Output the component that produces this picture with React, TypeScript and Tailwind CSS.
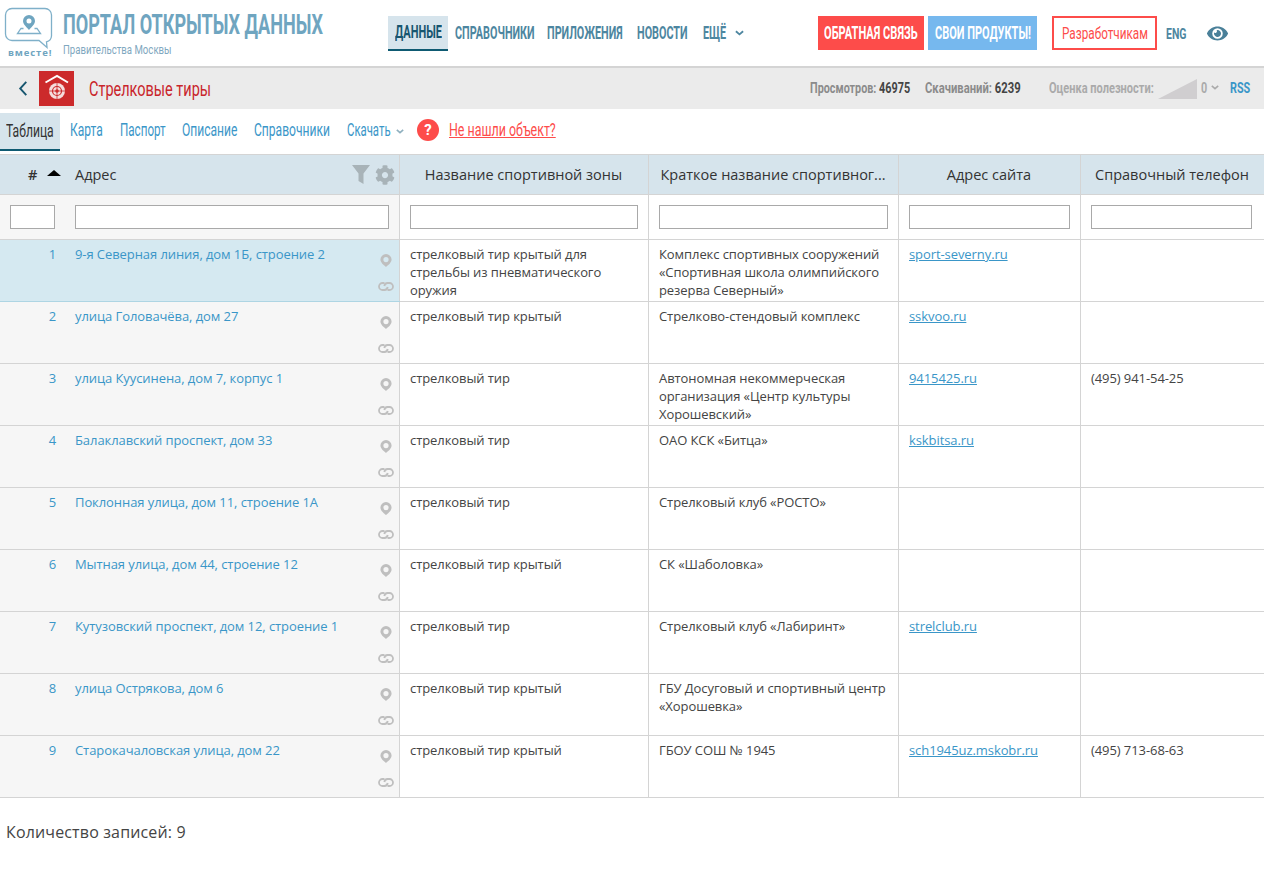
import React from "react";
import { FaCog, FaEye } from "react-icons/fa";

const cond = "font-['Roboto',sans-serif]";
const n = "inline-block whitespace-nowrap origin-left";

const rows = [
  ["1", "9-я Северная линия, дом 1Б, строение 2", ["стрелковый тир крытый для", "стрельбы из пневматического", "оружия"], ["Комплекс спортивных сооружений", "«Спортивная школа олимпийского", "резерва Северный»"], "sport-severny.ru", ""],
  ["2", "улица Головачёва, дом 27", ["стрелковый тир крытый"], ["Стрелково-стендовый комплекс"], "sskvoo.ru", ""],
  ["3", "улица Куусинена, дом 7, корпус 1", ["стрелковый тир"], ["Автономная некоммерческая", "организация «Центр культуры", "Хорошевский»"], "9415425.ru", "(495) 941-54-25"],
  ["4", "Балаклавский проспект, дом 33", ["стрелковый тир"], ["ОАО КСК «Битца»"], "kskbitsa.ru", ""],
  ["5", "Поклонная улица, дом 11, строение 1А", ["стрелковый тир"], ["Стрелковый клуб «РОСТО»"], "", ""],
  ["6", "Мытная улица, дом 44, строение 12", ["стрелковый тир крытый"], ["СК «Шаболовка»"], "", ""],
  ["7", "Кутузовский проспект, дом 12, строение 1", ["стрелковый тир"], ["Стрелковый клуб «Лабиринт»"], "strelclub.ru", ""],
  ["8", "улица Острякова, дом 6", ["стрелковый тир крытый"], ["ГБУ Досуговый и спортивный центр", "«Хорошевка»"], "", ""],
  ["9", "Старокачаловская улица, дом 22", ["стрелковый тир крытый"], ["ГБОУ СОШ № 1945"], "sch1945uz.mskobr.ru", "(495) 713-68-63"],
] as const;

function Chevron({ className }: { className: string }) {
  return (
    <svg viewBox="0 0 10 6" className={className} fill="none" stroke="currentColor" strokeWidth="2">
      <path d="M1 1l4 3.500L9 1" />
    </svg>
  );
}

function Pin() {
  return (
    <svg viewBox="0 0 12 14" className="h-[13px] w-3">
      <path fillRule="evenodd" fill="#bfbfbf" d="M6 0a6 6 0 0 0-6 6c0 3.400 4 6.500 6 8 2-1.500 6-4.600 6-8a6 6 0 0 0-6-6zm0 3.200a2.800 2.800 0 1 1 0 5.600 2.800 2.800 0 0 1 0-5.600z" />
    </svg>
  );
}

function LinkIcon() {
  return (
    <svg viewBox="0 0 16 9" className="h-[9px] w-4" fill="none" stroke="#bfbfbf" strokeWidth="1.800">
      <path d="M6.500 1H4.500a3.500 3.500 0 0 0 0 7h2a3.500 3.500 0 0 0 3.200-3" />
      <path d="M9.500 8h2a3.500 3.500 0 0 0 0-7h-2a3.500 3.500 0 0 0-3.200 3" />
    </svg>
  );
}

function Logo() {
  return (
    <svg viewBox="0 0 56 60" className="h-[60px] w-14 shrink-0">
      <path d="M12 8.500h33a6.500 6.500 0 0 1 6.500 6.500v21a6.500 6.500 0 0 1-5 5.800l.5 5.700-8-7H12A6.500 6.500 0 0 1 5.500 34V15A6.500 6.500 0 0 1 12 8.500z" fill="none" stroke="#7fb0c9" strokeWidth="1.300" />
      <path fillRule="evenodd" fill="#6fa5c0" d="M29 15a6 6 0 0 0-6 6c0 3.200 4 6.800 6 9 2-2.200 6-5.800 6-9a6 6 0 0 0-6-6zm0 3.500a2.500 2.500 0 1 1 0 5 2.500 2.500 0 0 1 0-5z" />
      <path d="M23.500 28.500H21l-3.500 5h23L37 28.500h-2.500" fill="none" stroke="#7fb0c9" strokeWidth="1.300" />
      <text x="8" y="56" fontSize="9.500" fontWeight="700" letterSpacing="0.900" fill="#6fa5c0" fontFamily="'Open Sans', sans-serif">вместе!</text>
    </svg>
  );
}

function Target() {
  return (
    <svg viewBox="0 0 35 35" className="h-[35px] w-[35px] shrink-0">
      <rect width="35" height="35" fill="#cc2a2b" />
      <path d="M6.500 11.500L18 5l11 6.500" fill="none" stroke="#fff" strokeWidth="2" />
      <circle cx="18" cy="20" r="8" fill="#f5dddd" />
      <circle cx="18" cy="20" r="4.500" fill="none" stroke="#cc2a2b" strokeWidth="1.200" />
      <circle cx="18" cy="20" r="1.800" fill="#cc2a2b" />
      <path d="M18 12v16M10 20h16" stroke="#cc2a2b" strokeWidth="0.800" />
    </svg>
  );
}

function Input({ className }: { className: string }) {
  return <input className={`h-6 border border-[#a9a9a9] bg-white ${className}`} />;
}

export default function App() {
  return (
    <div className="min-h-[892px] bg-white font-['Open_Sans',sans-serif] text-[13px] leading-[18px] tracking-[-0.08px] text-[#444]">
      <header className={`flex h-[68px] items-start border-b-2 border-[#d4d4d4] tracking-normal ${cond}`}>
        <Logo />
        <div className="ml-[7px] mt-[9px] w-[325px]">
          <div className={`${n} scale-x-[0.669] text-[27px] font-bold leading-[32px] text-[#6fa5c0]`}>ПОРТАЛ ОТКРЫТЫХ ДАННЫХ</div>
          <div className={`${n} block scale-x-[0.74] text-[13px] leading-[14px] text-[#7fa8c0]`}>Правительства Москвы</div>
        </div>
        <nav className="mt-4 flex h-[35px] items-center text-[18px] font-bold text-[#4d86a0]">
          <span className="flex h-[35px] w-[60px] items-center border-b-2 border-[#0e5a72] bg-[#d6e4ec] pb-[2px] pl-[7px] text-[#17566f]">
            <span className={`${n} scale-x-[0.61]`}>ДАННЫЕ</span>
          </span>
          <span className={`${n} ml-[7px] mb-[2px] w-[79px] scale-x-[0.6]`}>СПРАВОЧНИКИ</span>
          <span className={`${n} ml-[13px] mb-[2px] w-[77px] scale-x-[0.6]`}>ПРИЛОЖЕНИЯ</span>
          <span className={`${n} ml-[13px] mb-[2px] w-[49px] scale-x-[0.6]`}>НОВОСТИ</span>
          <span className={`${n} ml-[17px] mb-[2px] w-[24px] scale-x-[0.6]`}>ЕЩЁ</span>
          <Chevron className="ml-2 mb-[2px] h-[6px] w-[9px]" />
        </nav>
        <div className="ml-[74px] mt-4 flex h-[34px] w-[106px] items-center bg-[#fd4c4a] pl-[6px] text-[18px] font-bold text-white">
          <span className={`${n} scale-x-[0.615]`}>ОБРАТНАЯ СВЯЗЬ</span>
        </div>
        <div className="ml-[4px] mt-4 flex h-[34px] w-[109px] items-center bg-[#76b8ee] pl-[7px] text-[18px] font-bold text-white">
          <span className={`${n} scale-x-[0.61]`}>СВОИ ПРОДУКТЫ!</span>
        </div>
        <div className="ml-[15px] mt-4 flex h-[34px] w-[105px] items-center border-2 border-[#fd4c4a] pl-2 text-[17px] text-[#fd4c4a]">
          <span className={`${n} scale-x-[0.69]`}>Разработчикам</span>
        </div>
        <div className="ml-[9px] mt-[17px] flex h-[34px] w-[19px] items-center text-[15px] font-bold text-[#4d86a0]">
          <span className={`${n} scale-x-[0.7]`}>ENG</span>
        </div>
        <FaEye className="ml-[22px] mt-[23px] h-[21px] w-[21px] text-[#4a8099]" />
      </header>

      <div className={`flex h-[41px] items-center bg-[#ebebeb] tracking-normal ${cond}`}>
        <svg viewBox="0 0 10 16" className="ml-[18px] h-[15px] w-[10px]" fill="none" stroke="#17566f" strokeWidth="2">
          <path d="M8.500 1L2 8l6.500 7" />
        </svg>
        <div className="ml-[11px]">
          <Target />
        </div>
        <div className={`${n} ml-[15px] w-[122px] scale-x-[0.69] text-[21px] text-[#c9252b]`}>Стрелковые тиры</div>
        <div className={`${n} ml-[599px] mb-[2px] w-[101px] scale-x-[0.72] text-[15px] font-bold text-[#8b8b8b]`}>
          Просмотров: <span className="text-[#444]">46975</span>
        </div>
        <div className={`${n} ml-[14px] mb-[2px] w-[96px] scale-x-[0.75] text-[15px] font-bold text-[#8b8b8b]`}>
          Скачиваний: <span className="text-[#444]">6239</span>
        </div>
        <div className={`${n} ml-[28px] mb-[2px] w-[104px] scale-x-[0.735] text-[15px] font-bold text-[#aaa]`}>Оценка полезности:</div>
        <svg viewBox="0 0 39 20" className="ml-[5px] h-5 w-[39px]">
          <path d="M0 20L39 0v20z" fill="#d0ced0" />
        </svg>
        <span className={`${n} ml-1 mb-[2px] w-[6px] scale-x-[0.72] text-[15px] font-bold text-[#aaa]`}>0</span>
        <Chevron className="ml-1 mb-[2px] h-[5px] w-2 text-[#aaa]" />
        <span className={`${n} ml-[11px] mb-[2px] scale-x-[0.72] text-[15px] font-bold text-[#3a96c8]`}>RSS</span>
      </div>

      <div className={`flex h-[45px] items-start text-[18px] tracking-normal text-[#3a96c8] ${cond}`}>
        <div className="mt-[4px] flex h-[38px] w-[60px] items-center border-b-2 border-[#0e5a72] bg-[#d6e4ec] pl-[6px] text-[#333]">
          <span className={`${n} scale-x-[0.674]`}>Таблица</span>
        </div>
        <span className={`${n} ml-[10px] mt-[12px] w-[32px] scale-x-[0.67]`}>Карта</span>
        <span className={`${n} ml-[18px] mt-[12px] w-[46px] scale-x-[0.646]`}>Паспорт</span>
        <span className={`${n} ml-[16px] mt-[12px] w-[56px] scale-x-[0.67]`}>Описание</span>
        <span className={`${n} ml-[16px] mt-[12px] w-[76px] scale-x-[0.67]`}>Справочники</span>
        <span className={`${n} ml-[17px] mt-[12px] w-[45px] scale-x-[0.63]`}>Скачать</span>
        <Chevron className="ml-1 mt-[20px] h-[5px] w-2 text-[#8fb0bf]" />
        <span className="ml-[13px] mt-[10px] flex h-[22px] w-[22px] items-center justify-center rounded-full bg-[#fd4c4a] text-[15px] font-bold text-white">?</span>
        <span className={`${n} ml-[10px] mt-[12px] scale-x-[0.69] text-[#fd4c4a] underline`}>Не нашли объект?</span>
      </div>

      <table className="w-[1264px] table-fixed border-collapse">
        <colgroup>
          <col className="w-[65px]" />
          <col className="w-[334px]" />
          <col className="w-[249px]" />
          <col className="w-[250px]" />
          <col className="w-[182px]" />
          <col className="w-[184px]" />
        </colgroup>
        <thead>
          <tr className="h-[40px] border-y border-[#d4d4d4] bg-[#d6e4ec] text-[14.5px] tracking-normal text-[#333]">
            <th className="pl-[28px] text-left font-normal">
              <span className="mr-[10px] font-semibold">#</span>
              <span className="relative top-[-4px] inline-block h-0 w-0 border-x-[7px] border-b-[6px] border-x-transparent border-b-black" />
            </th>
            <th className="border-r border-[#d4d4d4] pl-[10px] text-left font-normal">
              <div className="flex items-center justify-between pr-[4px]">
                <span>Адрес</span>
                <span className="flex items-center gap-[5px]">
                  <svg viewBox="0 0 18 19" className="h-[19px] w-[18px]">
                    <path d="M0 0h18l-6.500 8.500V19l-5-3V8.500z" fill="#a8b3b8" />
                  </svg>
                  <FaCog className="h-5 w-5 text-[#a8b3b8]" />
                </span>
              </div>
            </th>
            <th className="border-r border-[#d4d4d4] font-normal">Название спортивной зоны</th>
            <th className="border-r border-[#d4d4d4] font-normal">Краткое название спортивног...</th>
            <th className="border-r border-[#d4d4d4] font-normal">Адрес сайта</th>
            <th className="border-r border-[#d4d4d4] font-normal">Справочный телефон</th>
          </tr>
          <tr className="h-[45px] border-b border-[#d4d4d4]">
            <th className="bg-[#f6f6f6] pl-[10px] text-left"><Input className="w-[45px]" /></th>
            <th className="border-r border-[#d4d4d4] bg-[#f6f6f6] pl-[10px] text-left"><Input className="w-[314px]" /></th>
            <th className="border-r border-[#d4d4d4] pl-[10px] text-left"><Input className="w-[228px]" /></th>
            <th className="border-r border-[#d4d4d4] pl-[10px] text-left"><Input className="w-[229px]" /></th>
            <th className="border-r border-[#d4d4d4] pl-[10px] text-left"><Input className="w-[161px]" /></th>
            <th className="border-r border-[#d4d4d4] pl-[10px] text-left"><Input className="w-[161px]" /></th>
          </tr>
        </thead>
        <tbody>
          {rows.map((r, i) => {
            const left = i === 0 ? "bg-[#d5e9f1] border-b-[#aed5e3]" : "bg-[#f6f6f6] border-b-[#d4d4d4]";
            return (
              <tr key={r[0]} className="h-[62px] border-b border-[#d4d4d4] align-top">
                <td className={`border-b pr-[9px] pt-[5px] text-right text-[#3a96c8] ${left}`}>{r[0]}</td>
                <td className={`border-b border-r border-r-[#d4d4d4] pl-[10px] pr-[5px] pt-[5px] ${left}`}>
                  <div className="flex justify-between">
                    <span className="text-[#3a96c8]">{r[1]}</span>
                    <span className="mt-[9px] flex h-[37px] w-4 flex-col items-center justify-between">
                      <Pin />
                      <LinkIcon />
                    </span>
                  </div>
                </td>
                <td className="border-r border-[#d4d4d4] pl-[10.5px] pr-[10px] pt-[5px]">
                  {r[2].map((l) => <div key={l} className="whitespace-nowrap">{l}</div>)}
                </td>
                <td className="border-r border-[#d4d4d4] pl-[10.5px] pr-[10px] pt-[5px]">
                  {r[3].map((l) => <div key={l} className="whitespace-nowrap">{l}</div>)}
                </td>
                <td className="border-r border-[#d4d4d4] pl-[10.5px] pr-[10px] pt-[5px]">
                  {r[4] && <span className="text-[#3a96c8] underline">{r[4]}</span>}
                </td>
                <td className="border-r border-[#d4d4d4] pl-[10.5px] pr-[10px] pt-[5px]">{r[5]}</td>
              </tr>
            );
          })}
        </tbody>
      </table>

      <div className="mt-[24px] pl-[6px] text-[16px] leading-[20px] tracking-[0.15px] text-[#444]">Количество записей: 9</div>
    </div>
  );
}
